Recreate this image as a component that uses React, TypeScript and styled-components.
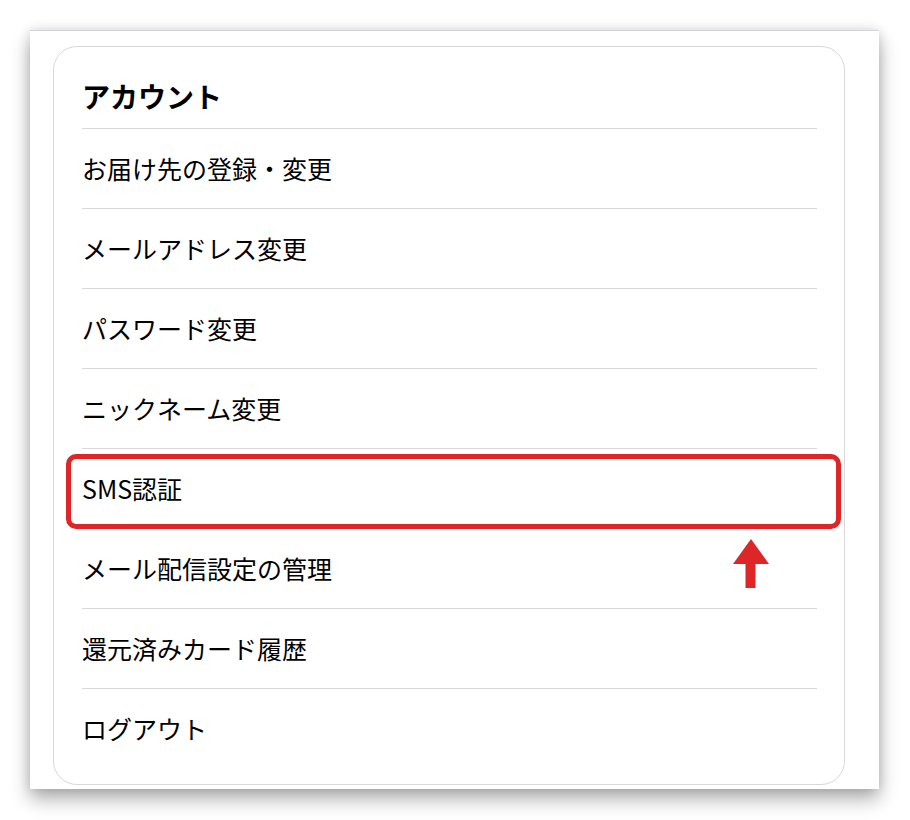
import React from 'react';
import styled, { createGlobalStyle } from 'styled-components';

const GlobalStyle = createGlobalStyle`
  body {
    margin: 0;
    min-height: 820px;
    background: #ffffff;
    font-family: "Noto Sans CJK JP", "Noto Sans", sans-serif;
    color: #000;
  }
`;

const Page = styled.div`
  padding: 30px 0 31px 30px;
`;

const Panel = styled.div`
  box-sizing: border-box;
  width: 849px;
  height: 759px;
  background: #fff;
  border-top: 1px solid #d4d4d8;
  box-shadow: 0 10px 18px rgba(0, 0, 0, 0.32), 0 0 10px rgba(0, 0, 0, 0.12);
  padding: 15px 34px 0 23px;
`;

const Card = styled.div`
  border: 1px solid #d8d8d8;
  border-radius: 24px;
  padding: 0 27px 15px 28px;
`;

const Title = styled.h2`
  box-sizing: border-box;
  height: 82px;
  margin: 0;
  padding-top: 16px;
  display: flex;
  align-items: center;
  font-size: 28px;
  font-weight: 700;
  border-bottom: 1px solid #d8d8d8;
`;

const Item = styled.div<{ $last?: boolean }>`
  position: relative;
  box-sizing: border-box;
  height: 80px;
  display: flex;
  align-items: center;
  padding-bottom: 2px;
  font-size: 25px;
  font-weight: 400;
  border-bottom: ${(p) => (p.$last ? 'none' : '1px solid #d8d8d8')};
`;

const Highlight = styled.div`
  position: absolute;
  top: 5px;
  bottom: -1px;
  left: -16px;
  right: -24px;
  border: 5px solid #dd2628;
  border-radius: 10px;
  pointer-events: none;
`;

const Arrow = styled.svg`
  position: absolute;
  top: 90px;
  left: 650px;
`;

const items = [
  'お届け先の登録・変更',
  'メールアドレス変更',
  'パスワード変更',
  'ニックネーム変更',
  'SMS認証',
  'メール配信設定の管理',
  '還元済みカード履歴',
  'ログアウト',
];

const App: React.FC = () => {
  return (
    <>
      <GlobalStyle />
      <Page>
        <Panel>
          <Card>
            <Title>アカウント</Title>
            {items.map((label, i) => (
              <Item key={label} $last={i === items.length - 1}>
                {label}
                {label === 'SMS認証' && (
                  <>
                    <Highlight />
                    <Arrow width="38" height="50" viewBox="0 0 38 50">
                      <polygon points="19,0 37,25 1,25" fill="#dd2628" />
                      <rect x="13.5" y="24" width="10" height="25" fill="#dd2628" />
                    </Arrow>
                  </>
                )}
              </Item>
            ))}
          </Card>
        </Panel>
      </Page>
    </>
  );
};

export default App;
